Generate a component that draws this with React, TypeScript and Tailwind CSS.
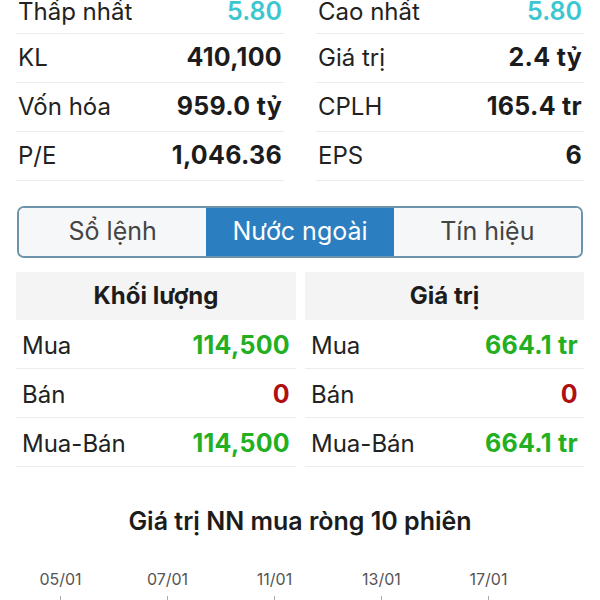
const font = { fontFamily: "Inter, 'Noto Sans', sans-serif" }

const stats: [string, string, string, string, boolean][] = [
  ["Thấp nhất", "5.80", "Cao nhất", "5.80", true],
  ["KL", "410,100", "Giá trị", "2.4 tỷ", false],
  ["Vốn hóa", "959.0 tỷ", "CPLH", "165.4 tr", false],
  ["P/E", "1,046.36", "EPS", "6", false],
]

const StatRow = ({ label, value, cyan }: { label: string; value: string; cyan: boolean }) => (
  <div className={`flex items-center justify-between h-[49px] border-b border-[#ececec] px-[2px] ${cyan ? "pt-[6px]" : ""}`}>
    <span className="text-[24px] text-[#222]">{label}</span>
    <span className={cyan ? "text-[25px] font-semibold text-[#3cc6d0]" : "text-[25px] font-bold text-[#1c1c1c] tracking-[0.3px]"}>
      {value}
    </span>
  </div>
)

interface IFlow {
  title: string
  buy: string
  sell: string
  net: string
}

const FlowTable = ({ title, buy, sell, net }: IFlow) => (
  <div className="flex flex-col">
    <div className="h-[48px] bg-[#f4f4f4] flex items-center justify-center text-[24px] font-bold text-[#1c1c1c]">
      {title}
    </div>
    {[
      ["Mua", buy, "text-[#22b022]"],
      ["Bán", sell, "text-[#b01010]"],
      ["Mua-Bán", net, "text-[#22b022]"],
    ].map(([l, v, c]) => (
      <div key={l} className="flex items-center justify-between h-[49px] pt-[4px] border-b border-[#ececec] px-[6px]">
        <span className="text-[24px] text-[#222]">{l}</span>
        <span className={`text-[25px] font-bold tracking-[0.3px] ${c}`}>{v}</span>
      </div>
    ))}
  </div>
)

export default function App() {
  const dates = ["05/01", "07/01", "11/01", "13/01", "17/01"]
  return (
    <div className="w-[600px] h-[600px] overflow-hidden bg-white" style={font}>
      <div className="px-4 -mt-[15px] grid grid-cols-2 gap-8">
        <div>
          {stats.map((s) => (
            <StatRow key={s[0]} label={s[0]} value={s[1]} cyan={s[4]} />
          ))}
        </div>
        <div>
          {stats.map((s) => (
            <StatRow key={s[2]} label={s[2]} value={s[3]} cyan={s[4]} />
          ))}
        </div>
      </div>

      <div className="mx-[17px] mt-[25px] h-[52px] grid grid-cols-3 border-2 border-[#6d94aa] rounded-[7px] overflow-hidden text-[25px]">
        <div className="flex items-center justify-center bg-[#f6f7f8] text-[#444]">Sổ lệnh</div>
        <div className="flex items-center justify-center bg-[#2b7ec0] text-white">Nước ngoài</div>
        <div className="flex items-center justify-center bg-[#f6f7f8] text-[#444]">Tín hiệu</div>
      </div>

      <div className="mt-[14px] pl-4 pr-4 grid grid-cols-[280px_279px] gap-[9px]">
        <FlowTable title="Khối lượng" buy="114,500" sell="0" net="114,500" />
        <FlowTable title="Giá trị" buy="664.1 tr" sell="0" net="664.1 tr" />
      </div>

      <div className="mt-[38px] text-center text-[25px] font-semibold text-[#1c1c1c] leading-[32px]">
        Giá trị NN mua ròng 10 phiên
      </div>

      <div className="mt-[32px] pl-[7px] grid grid-cols-[repeat(5,107px)]">
        {dates.map((d) => (
          <div key={d} className="flex flex-col items-center">
            <span className="text-[16px] text-[#555] leading-[20px]">{d}</span>
            <span className="mt-[7px] w-px h-[8px] bg-[#aaa]" />
          </div>
        ))}
      </div>
    </div>
  )
}
